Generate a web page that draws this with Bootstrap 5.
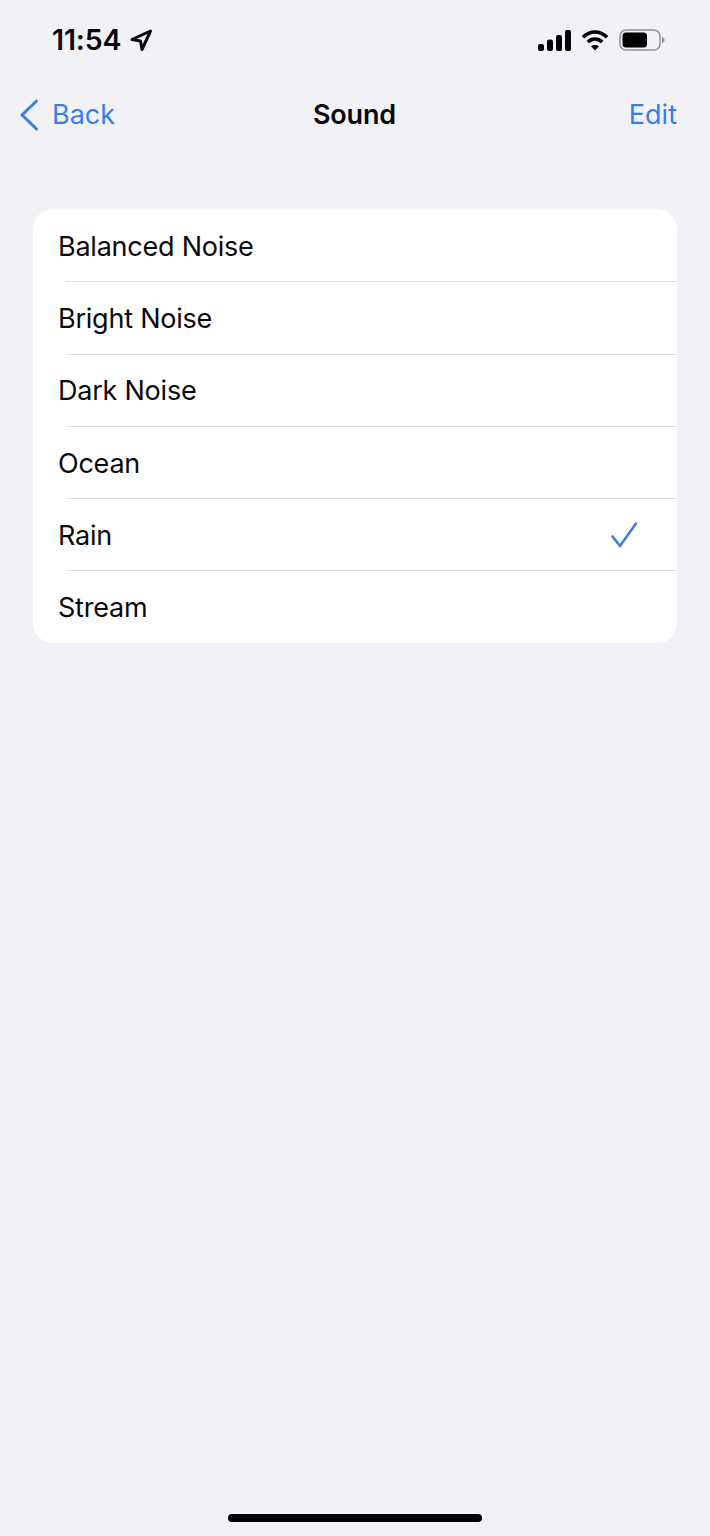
<!DOCTYPE html>
<html lang="en">
<head>
<meta charset="utf-8">
<title>Sound</title>
<link href="https://cdn.jsdelivr.net/npm/bootstrap@5.3.0/dist/css/bootstrap.min.css" rel="stylesheet">
<style>
html,body{height:100%}
body{background:#f1f1f6;font-family:Inter,"Liberation Sans",sans-serif;color:#0a0a0a;overflow:hidden}
.screen{height:1536px;width:710px}
.statusbar{height:80px;padding:0 45px 0 52px}
.clock{font-size:28.5px;font-weight:600;letter-spacing:-.15px;line-height:1}
.topbar{height:70px;padding:0 33px 0 20px;position:relative}
.title{font-size:27px;font-weight:600;letter-spacing:-.15px;margin-left:-.5px}
.actionlink{font-size:27px;color:#3b7de8;text-decoration:none;letter-spacing:0}
.backlabel{margin-left:-2px}
.sheet{margin:59px 33px 0;border-radius:20px;background:#fff;overflow:hidden}
.sheet .list-group-item{height:72.3px;padding:4px 40px 0 25px;border:0;font-size:27px;letter-spacing:-.23px;color:#0a0a0a;position:relative;background:transparent}
.sheet .list-group-item+.list-group-item::before{content:"";position:absolute;left:33px;right:0;top:0;height:1px;background:#e1e1e5}
.checkmark{margin-top:-3px}
.homebar{width:254px;height:8px;border-radius:4px;background:#000;margin:0 auto 14px}
.status-icons{gap:10px}
</style>
</head>
<body>
<div class="screen d-flex flex-column">
  <div class="statusbar d-flex align-items-center justify-content-between">
    <div class="d-flex align-items-center gap-2">
      <span class="clock">11:54</span>
      <svg width="24" height="24" viewBox="0 0 24 24" fill="none" stroke="#0a0a0a" stroke-width="3" stroke-linejoin="round"><path d="M21.500 3 3 11.500l8.500 1.500 1.500 8.500z"/></svg>
    </div>
    <div class="status-icons d-flex align-items-center">
      <svg width="33" height="21" viewBox="0 0 33 21" fill="#000"><rect x="0" y="14" width="6" height="7" rx="2"/><rect x="9" y="9.500" width="6" height="11.500" rx="2"/><rect x="18" y="5" width="6" height="16" rx="2"/><rect x="27" y="0" width="6" height="21" rx="2"/></svg>
      <svg width="28" height="21" viewBox="0 0 27 21" fill="none" stroke="#000" stroke-width="3.600"><path d="M1.500 7.300C8.500.300 18.500.300 25.500 7.300"/><path d="M6.300 12C10.500 8 16.500 8 20.700 12"/><path d="M13.500 20.500 9.500 16.300C11.500 14.500 15.500 14.500 17.500 16.300Z" fill="#000" stroke="none"/></svg>
      <svg width="46" height="22" viewBox="0 0 46 22" fill="none"><rect x="1" y="1" width="40" height="20" rx="6" stroke="#8f8f94" stroke-width="1.500"/><rect x="3.500" y="3.500" width="24.500" height="15" rx="3.500" fill="#000"/><path d="M43 8c1.600.5 2.500 1.600 2.500 3s-.9 2.500-2.500 3z" fill="#8f8f94"/></svg>
    </div>
  </div>
  <div class="topbar d-flex align-items-center justify-content-between">
    <a class="actionlink d-flex align-items-center gap-3" href="#">
      <svg width="18" height="32" viewBox="0 0 18 32" fill="none" stroke="#3b7de8" stroke-width="3" stroke-linecap="round" stroke-linejoin="round"><path d="M16.500 2 2 16l14.500 14"/></svg>
      <span class="backlabel">Back</span>
    </a>
    <span class="title position-absolute top-50 start-50 translate-middle">Sound</span>
    <a class="actionlink" href="#">Edit</a>
  </div>
  <div class="sheet list-group">
    <div class="list-group-item d-flex align-items-center">Balanced Noise</div>
    <div class="list-group-item d-flex align-items-center">Bright Noise</div>
    <div class="list-group-item d-flex align-items-center">Dark Noise</div>
    <div class="list-group-item d-flex align-items-center">Ocean</div>
    <div class="list-group-item d-flex align-items-center justify-content-between">
      <span>Rain</span>
      <svg class="checkmark" width="26" height="26" viewBox="0 0 26 26" fill="none" stroke="#3b7de8" stroke-width="2.600" stroke-linecap="round" stroke-linejoin="round"><path d="M1.500 14.500 9 24 25 1.500"/></svg>
    </div>
    <div class="list-group-item d-flex align-items-center">Stream</div>
  </div>
  <div class="homebar mt-auto"></div>
</div>
<script src="https://cdn.jsdelivr.net/npm/bootstrap@5.3.0/dist/js/bootstrap.bundle.min.js"></script>
</body>
</html>
